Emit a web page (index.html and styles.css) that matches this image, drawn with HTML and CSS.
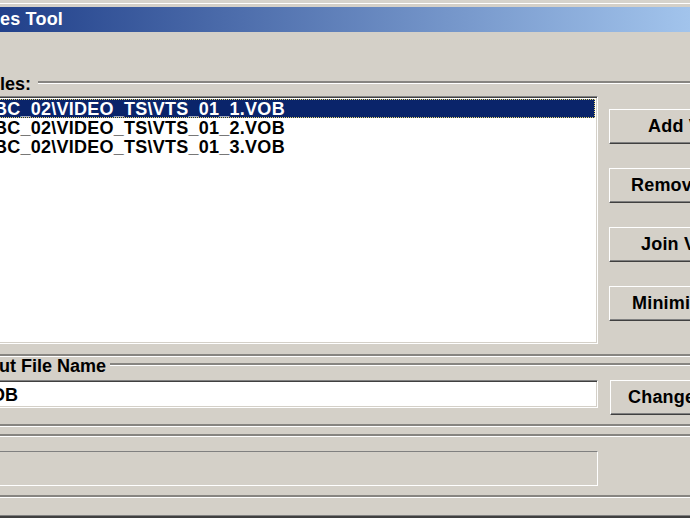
FILE: index.html
```html
<!DOCTYPE html>
<html>
<head>
<meta charset="utf-8">
<link rel="stylesheet" href="styles.css">
</head>
<body>
<div class="dialog">
  <div class="frame-top"></div>
  <div class="titlebar"><span class="title-text">es Tool</span></div>

  <div class="group-head head-files">
    <span class="group-label">Files:</span>
    <span class="etch fill"></span>
  </div>

  <div class="main-row">
    <div class="listbox">
      <div class="item selected">BC_02\VIDEO_TS\VTS_01_1.VOB</div>
      <div class="item">BC_02\VIDEO_TS\VTS_01_2.VOB</div>
      <div class="item">BC_02\VIDEO_TS\VTS_01_3.VOB</div>
    </div>
    <div class="buttons">
      <div class="btn btn-add">Add VOB</div>
      <div class="btn btn-remove">Remove</div>
      <div class="btn btn-join">Join VOB</div>
      <div class="btn btn-min">Minimize</div>
    </div>
  </div>

  <div class="etch line-g1-bottom"></div>

  <div class="group-head head-output">
    <span class="group-label label-output">Output File Name</span>
    <span class="etch fill"></span>
  </div>

  <div class="field-row">
    <div class="textfield">VOB</div>
    <div class="btn btn-change">Change</div>
  </div>

  <div class="etch line-g2-bottom"></div>
  <div class="etch line-g3-top"></div>

  <div class="status-row">
    <div class="status"></div>
  </div>

  <div class="etch line-g3-bottom"></div>
  <div class="frame-bottom"></div>
</div>
</body>
</html>
```

FILE: styles.css
```css
html, body {
  margin: 0;
  padding: 0;
}

body {
  width: 690px;
  height: 518px;
  overflow: hidden;
  background: #d4d0c8;
  font-family: "Liberation Sans", Arial, sans-serif;
  font-weight: bold;
  font-size: 18px;
  color: #000;
}

.dialog {
  margin-left: -60px;
  width: 820px;
  display: flex;
  flex-direction: column;
}

.frame-top {
  height: 7px;
  background: linear-gradient(#d6d3cc 0 3px, #ffffff 3px 4px, #d4d0c8 4px);
}

.titlebar {
  height: 25px;
  background: linear-gradient(90deg, #16347c 0px, #21408a 60px, #a2c4ec 750px);
  display: flex;
  align-items: center;
}

.title-text {
  color: #fff;
  margin-left: 60px;
  line-height: 25px;
  letter-spacing: 0.2px;
}

.etch {
  display: block;
  height: 0;
  border-top: 2px solid #878581;
  border-bottom: 1px solid #ffffff;
}

.group-head {
  display: flex;
  align-items: flex-start;
  height: 18px;
}

.head-files {
  margin-top: 43px;
}

.group-label {
  line-height: 19px;
  margin-left: 44px;
  padding-right: 7px;
}

.label-output {
  margin-left: 17px;
  padding-right: 4px;
}

.group-head .fill {
  flex: 1;
  margin-top: 6px;
}

.main-row {
  display: flex;
  align-items: flex-start;
  margin-top: 3px;
}

.listbox {
  width: 656px;
  height: 244px;
  background: #fff;
  border-top: 1px solid #808080;
  border-left: 1px solid #808080;
  border-bottom: 1px solid #fff;
  border-right: 1px solid #fff;
  box-shadow: inset 1px 1px 0 #404040, inset -1px -1px 0 #d4d0c8;
  padding-top: 2px;
  box-sizing: content-box;
}

.item {
  height: 19px;
  line-height: 21px;
  overflow: hidden;
  padding-left: 53px;
  margin-right: 2px;
  white-space: nowrap;
  letter-spacing: 0.25px;
}

.item.selected {
  background: #0a246a;
  color: #fff;
  outline: 1px dotted #e8d870;
  outline-offset: -1px;
}

.buttons {
  margin-left: 11px;
  margin-top: 13px;
  display: flex;
  flex-direction: column;
  gap: 24px;
}

.btn {
  width: 130px;
  height: 35px;
  box-sizing: border-box;
  background: #d4d0c8;
  border-top: 1px solid #fff;
  border-left: 1px solid #fff;
  border-bottom: 1px solid #404040;
  border-right: 1px solid #404040;
  box-shadow: inset -1px -1px 0 #808080;
  line-height: 33px;
  white-space: nowrap;
  letter-spacing: 0.2px;
}

.btn-add { padding-left: 38px; }
.btn-remove { padding-left: 21px; }
.btn-join { padding-left: 31px; }
.btn-min { padding-left: 22px; }
.btn-change { padding-left: 17px; }

.line-g1-bottom {
  margin-top: 10px;
}

.field-row {
  display: flex;
  align-items: flex-start;
  margin-top: 5px;
}

.textfield {
  width: 618px;
  height: 26px;
  background: #fff;
  border-top: 1px solid #808080;
  border-left: 1px solid #808080;
  border-bottom: 1px solid #fff;
  border-right: 1px solid #fff;
  box-shadow: inset 1px 1px 0 #404040, inset -1px -1px 0 #d4d0c8;
  padding-left: 38px;
  line-height: 28px;
  box-sizing: content-box;
  flex: none;
}

.btn-change {
  margin-left: 12px;
}

.line-g2-bottom {
  margin-top: 9px;
}

.line-g3-top {
  margin-top: 7px;
}

.status-row {
  display: flex;
  margin-top: 14px;
}

.status {
  width: 656px;
  height: 33px;
  border-top: 1px solid #808080;
  border-left: 1px solid #808080;
  border-bottom: 1px solid #fff;
  border-right: 1px solid #fff;
}

.line-g3-bottom {
  margin-top: 9px;
}

.frame-bottom {
  margin-top: 17px;
  height: 3px;
  background: linear-gradient(#808080 0 1px, #404040 1px);
}
```
